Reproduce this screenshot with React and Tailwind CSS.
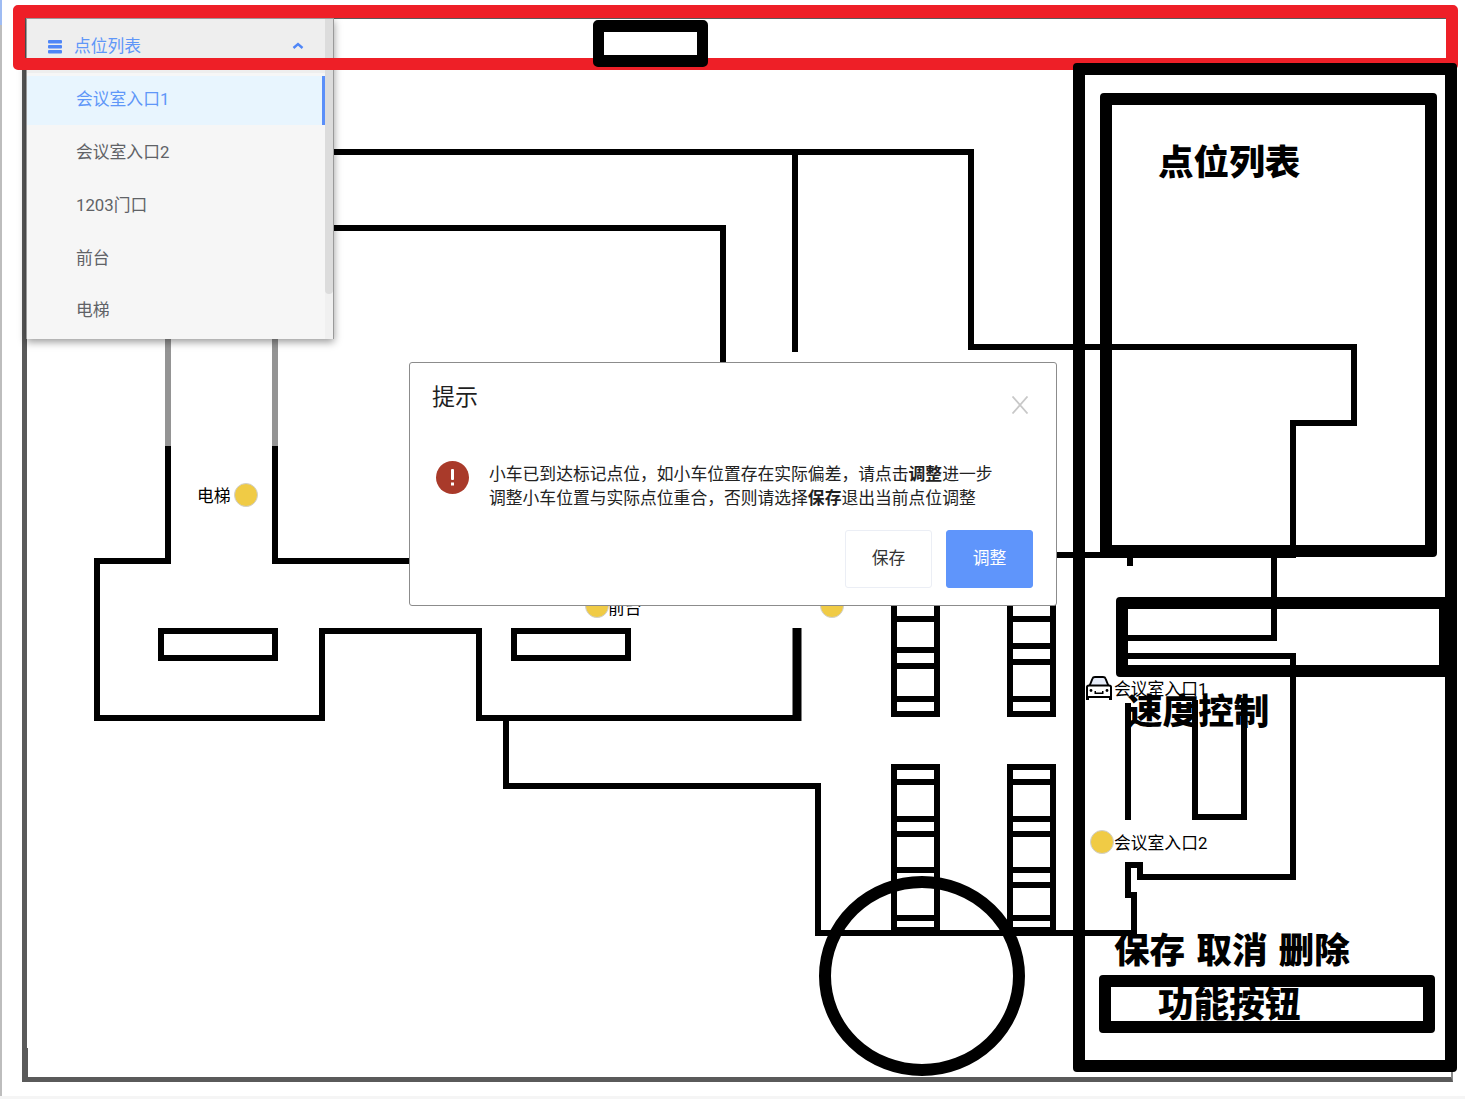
const cjk = "font-['Roboto','Noto_Sans_CJK_SC',sans-serif]";

const points = ['会议室入口1', '会议室入口2', '1203门口', '前台', '电梯'];

// rung positions of the shelf columns on the map, y of each bar's top edge
const rungsUpperA = [616, 647, 663, 696];
const rungsUpperB = [616, 643, 659, 696];
const rungsLower = [779, 816, 831, 867, 882, 915];

const Shelf = ({ x, y, h, rungs }) => (
  <g>
    <rect x={x + 3} y={y + 3} width={43} height={h - 6} fill="none" stroke="#000" strokeWidth="6" />
    {rungs.map((r) => (
      <rect key={r} x={x} y={r} width={49} height={6} fill="#000" />
    ))}
  </g>
);

const FloorPlan = () => (
  <svg className="absolute left-0 top-0" width="1465" height="1099" viewBox="0 0 1465 1099" fill="none">
    <g stroke="#000" strokeWidth="6" strokeLinejoin="miter">
      <path d="M333 152H971V347H1354V423H1293V555H1056" />
      <path d="M795 152V352" />
      <path d="M333 228H723V362" />
      <path d="M168 446V561H97V718H322V631H479V718H797" />
      <path d="M275 446V561H410" />
      <path d="M797 628V721" strokeWidth="9" />
      <path d="M506 718V786H818V933H1134V895H1128V865H1140V877H1293V656H1128" />
      <path d="M1274 555V638H1128" />
      <path d="M1130 555V566" />
      <path d="M1128 703V820" />
      <path d="M1195 700V817H1244V700" />
      <rect x="161" y="631" width="114" height="27" />
      <rect x="514" y="631" width="114" height="27" />
    </g>
    <path d="M168 338V446M275 338V446" stroke="#949494" strokeWidth="6" />
    <Shelf x={891} y={600} h={117} rungs={rungsUpperA} />
    <Shelf x={1007} y={600} h={117} rungs={rungsUpperB} />
    <Shelf x={891} y={764} h={169} rungs={rungsLower} />
    <Shelf x={1007} y={764} h={169} rungs={rungsLower} />
    <ellipse cx="922" cy="976" rx="97" ry="94" stroke="#000" strokeWidth="12" />
  </svg>
);

const Dot = ({ className }) => (
  <span className={`absolute h-[24px] w-[24px] rounded-full border border-[#cfcfcf] bg-[#f0cb45] ${className}`} />
);

const Label = ({ className, children }) => (
  <span className={`absolute whitespace-nowrap text-[16.8px] leading-[24px] text-black ${cjk} ${className}`}>{children}</span>
);

const CarIcon = () => (
  <svg className="absolute left-[1086px] top-[676px]" width="26" height="24" viewBox="0 0 26 24" fill="none">
    <path d="M3.5 10 6.5 2.5Q7 1 9 1H17Q19 1 19.5 2.5L22.5 10Z" fill="#e6ecf9" stroke="#000" strokeWidth="2" strokeLinejoin="round" />
    <path d="M1 11Q1 9.5 3 9.5H23Q25 9.5 25 11V21H1Z" fill="#fff" stroke="#000" strokeWidth="2" strokeLinejoin="round" />
    <path d="M0 20H26V24H23V22H3V24H0Z" fill="#000" />
    <path d="M8.5 15H10V16.5H16V15H17.5V18H8.5Z" fill="#000" />
    <circle cx="5" cy="14.5" r="1.4" fill="#000" />
    <circle cx="21" cy="14.5" r="1.4" fill="#000" />
  </svg>
);

const PointPanel = () => (
  <div className={`absolute left-[26px] top-[18px] flex h-[321px] w-[308px] overflow-hidden border-l border-t border-r border-[#9a9a9a] bg-[#f6f6f6] shadow-[0_3px_8px_rgba(0,0,0,0.4)] ${cjk}`}>
    <div className="flex min-w-0 flex-1 flex-col">
      <div className="flex h-[54px] shrink-0 items-center bg-[#eeeeee] px-[21px] text-[16.8px] text-[#5f97f8]">
        <svg width="14" height="14" viewBox="0 0 14 14" className="mr-[12px] mt-[2px]">
          <rect x="0" y="0" width="14" height="3.6" rx="1" fill="#4f86f7" />
          <rect x="0" y="5" width="14" height="3.6" rx="1" fill="#4f86f7" />
          <rect x="0" y="10" width="14" height="3.6" rx="1" fill="#4f86f7" />
        </svg>
        <span className="flex-1 leading-[24px]">点位列表</span>
        <svg width="12" height="8" viewBox="0 0 12 8" fill="none">
          <path d="M1.5 6 6 2 10.5 6" stroke="#4f86f7" strokeWidth="2.4" />
        </svg>
      </div>
      <ul className="flex flex-col gap-[3.75px] pt-[3px]">
        {points.map((name, i) => (
          <li
            key={name}
            className={
              i === 0
                ? 'flex h-[49px] items-center border-r-[3px] border-[#5b8ff9] bg-[#e8f5fe] pb-[1px] pl-[49px] text-[16.8px] text-[#5f97f8]'
                : 'flex h-[49px] items-center pb-[1px] pl-[49px] text-[16.8px] text-[#606266]'
            }
          >
            {name}
          </li>
        ))}
      </ul>
    </div>
    <div className="w-[8px] shrink-0 bg-[#f0f0f0]">
      <div className="h-[275px] rounded-b-[4px] bg-[#dcdcdc]" />
    </div>
  </div>
);

const Notice = () => (
  <div className={`absolute left-[409px] top-[362px] flex h-[244px] w-[648px] flex-col rounded-[3px] border border-[#8c8c8c] bg-white pl-[22px] pr-[23px] ${cjk}`}>
    <div className="flex h-[70px] shrink-0 justify-between">
      <span className="pt-[19px] text-[23px] leading-[32px] text-[#1f1f1f]">提示</span>
      <svg className="mr-[4px] mt-[33px]" width="18" height="18" viewBox="0 0 18 18" fill="none">
        <path d="M1.5 0.5 16.5 17.5M16.5 0.5 1.5 17.5" stroke="#c8c8c8" strokeWidth="1.8" />
      </svg>
    </div>
    <div className="flex items-start pl-[4px] pt-[29px]">
      <svg className="mr-[20px] -mt-[1px] shrink-0" width="33" height="33" viewBox="0 0 33 33">
        <circle cx="16.5" cy="16.5" r="16.5" fill="#a93a2a" />
        <rect x="15" y="8" width="3" height="11" rx="1" fill="#fff" />
        <rect x="15" y="21.5" width="3" height="3" fill="#fff" />
      </svg>
      <p className="text-[16.8px] leading-[24px] text-[#222]">
        小车已到达标记点位，如小车位置存在实际偏差，请点击<b>调整</b>进一步
        <br />
        调整小车位置与实际点位重合，否则请选择<b>保存</b>退出当前点位调整
      </p>
    </div>
    <div className="mt-[20px] flex justify-end gap-[14px]">
      <button className="h-[58px] w-[87px] rounded-[3px] border border-[#ebeef5] bg-white text-[16.8px] text-[#333]">保存</button>
      <button className="h-[58px] w-[87px] rounded-[3px] border border-[#5f95fb] bg-[#5f95fb] text-[16.8px] text-white">调整</button>
    </div>
  </div>
);

const boxText = "absolute whitespace-nowrap text-[35.6px] leading-[44px] font-black text-black font-['Noto_Sans_CJK_SC',sans-serif]";

const Annotations = () => (
  <>
    <div className="absolute left-[13px] top-[5px] h-[65px] w-[1445px] rounded-[5px] border-[12px] border-t-[13px] border-[#ee1f27]" />
    <div className="absolute left-[593px] top-[20px] h-[47px] w-[115px] rounded-[5px] border-x-[11px] border-y-[12px] border-black" />
    <div className="absolute left-[1073px] top-[63px] h-[1009px] w-[384px] rounded-[4px] border-[12px] border-black" />
    <div className="absolute left-[1100px] top-[93px] h-[464px] w-[337px] rounded-[4px] border-[12px] border-black" />
    <div className="absolute left-[1116px] top-[597px] h-[80px] w-[335px] rounded-[4px] border-[12px] border-black" />
    <div className="absolute left-[1099px] top-[975px] h-[58px] w-[336px] rounded-[4px] border-[12px] border-black" />
    <span className={`${boxText} left-[1158px] top-[138px]`}>点位列表</span>
    <span className={`${boxText} left-[1127px] top-[687px]`}>速度控制</span>
    <span className={`${boxText} left-[1114px] top-[926px] [word-spacing:3px]`}>保存 取消 删除</span>
    <span className={`${boxText} left-[1158px] top-[980px]`}>功能按钮</span>
  </>
);

const App = () => (
  <div className="relative h-[1099px] w-[1465px] overflow-hidden bg-white">
    <div className="absolute left-0 top-0 h-[1099px] w-[2px] bg-[#bdbdbd]" />
    <div className="absolute left-0 top-0 h-[25px] w-[2px] bg-[#9fbcf3]" />
    <div className="absolute bottom-0 left-0 h-[3px] w-[1465px] bg-[#f5f5f5]" />
    <div className="absolute left-[22px] top-[18px] h-[1064px] w-[1431px] border-b-[5px] border-l-[5px] border-r-[2px] border-t border-[#5a5a5a] border-r-[#8a8a8a]" />
    <div className="absolute left-[27px] top-[1048px] h-[29px] w-[1px] bg-[#5a5a5a]" />
    <FloorPlan />
    <Dot className="left-[234px] top-[483px]" />
    <Label className="left-[197px] top-[484px]">电梯</Label>
    <Dot className="left-[585px] top-[594px]" />
    <Label className="left-[608px] top-[596px]">前台</Label>
    <Dot className="left-[820px] top-[594px]" />
    <CarIcon />
    <Label className="left-[1114px] top-[677px]">会议室入口1</Label>
    <Dot className="left-[1090px] top-[830px]" />
    <Label className="left-[1114px] top-[831px]">会议室入口2</Label>
    <PointPanel />
    <Annotations />
    <Notice />
  </div>
);

export default App;
